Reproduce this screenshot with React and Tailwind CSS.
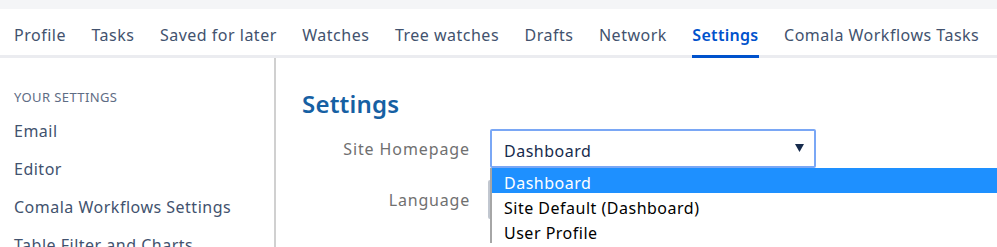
import React from 'react';

const tabs = ['Profile', 'Tasks', 'Saved for later', 'Watches', 'Tree watches', 'Drafts', 'Network', 'Settings', 'Comala Workflows Tasks'];
const sideItems = ['Email', 'Editor', 'Comala Workflows Settings', 'Table Filter and Charts'];
const options = ['Dashboard', 'Site Default (Dashboard)', 'User Profile'];

export default function App() {
  return (
    <div className="w-[997px] h-[247px] overflow-hidden bg-white font-['Noto_Sans',sans-serif] text-[16px] tracking-[0.5px]">
      <div className="h-[9px] bg-[#f4f5f7]" />

      {/* tabs */}
      <div className="h-[49px] flex items-end gap-[25.5px] pl-[14px] border-b-[3px] border-[#ebecf0]">
        {tabs.map((t) => (
          <div
            key={t}
            className={`h-[34px] -mb-[3px] border-b-[3px] leading-[22px] whitespace-nowrap ${
              t === 'Settings' ? 'border-[#0052cc] text-[#0052cc] font-semibold tracking-[0.3px]' : 'border-transparent text-[#42526e]'
            }`}
          >
            {t}
          </div>
        ))}
      </div>

      <div className="flex h-[190px]">
        {/* sidebar */}
        <div className="w-[276px] shrink-0 border-r-2 border-[#d0d0d0] pl-[14px] pt-[30px]">
          <div className="text-[13px] uppercase text-[#5e6c84] leading-[18px] tracking-[0.4px]">Your settings</div>
          <ul className="mt-[14px] text-[#42526e] leading-[22px] flex flex-col gap-[16px] whitespace-nowrap">
            {sideItems.map((s) => (
              <li key={s}>{s}</li>
            ))}
          </ul>
        </div>

        {/* main */}
        <div className="relative pl-[26px] pt-[31px]">
          <h1 className="text-[24px] font-semibold text-[#1660a3] leading-[30px] tracking-[0.2px]">Settings</h1>
          <div className="mt-[10px] flex items-center">
            <div className="w-[168px] text-right text-[#707070] leading-[22px] tracking-[0.9px]">Site Homepage</div>
            <div className="relative ml-[20px]">
              <div className="w-[326px] h-[39px] border-2 border-[#7aa7f5] rounded-[2px] flex items-center justify-between pl-[12px] pr-[10px] text-[#172b4d]">
                <span className="pt-[4px]">Dashboard</span>
                <svg width="9" height="8" viewBox="0 0 9 8" className="mb-[1px]">
                  <path d="M0 0h9L4.5 8z" fill="#172b4d" />
                </svg>
              </div>
              {/* open listbox */}
              <div className="absolute left-0 top-[39px] w-[600px] bg-white border-l-2 border-[#a6a6a6] z-10 text-black">
                {options.map((o, i) => (
                  <div
                    key={o}
                    className={`h-[25px] pt-[5px] leading-[20px] pl-[12px] whitespace-nowrap ${i === 0 ? 'bg-[#1e90ff] text-white' : ''}`}
                  >
                    {o}
                  </div>
                ))}
              </div>
            </div>
          </div>
          <div className="mt-[12px] flex items-center">
            <div className="w-[168px] text-right text-[#707070] leading-[22px] tracking-[0.8px]">Language</div>
            <div className="ml-[18px] w-[326px] h-[39px] border-2 border-[#c1c7d0] rounded-[2px]" />
          </div>
        </div>
      </div>
    </div>
  );
}
